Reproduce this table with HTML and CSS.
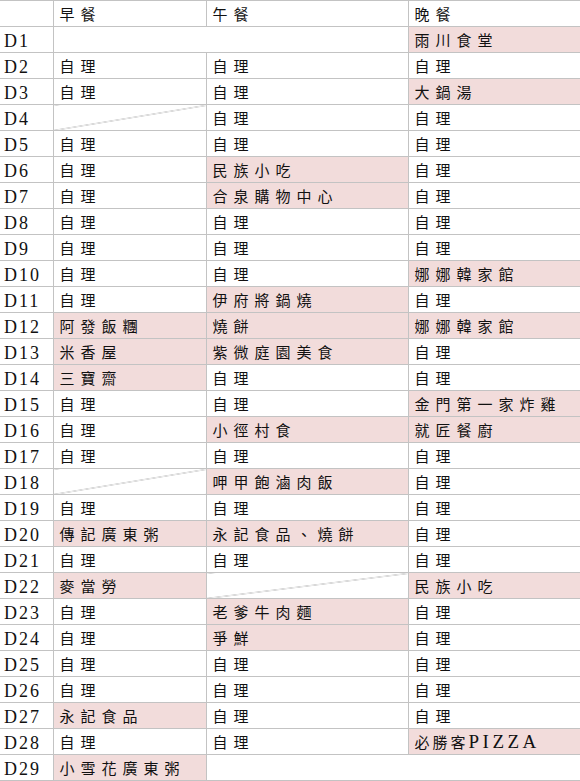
FILE: index.html
```html
<!DOCTYPE html>
<html lang="zh-Hant">
<head>
<meta charset="utf-8">
<title>餐表</title>
<link rel="stylesheet" href="styles.css">
</head>
<body>
<table class="meals">
  <colgroup>
    <col class="c-day"><col class="c-b"><col class="c-l"><col class="c-d">
  </colgroup>
  <thead>
    <tr><th class="day"></th><th>早餐</th><th>午餐</th><th>晚餐</th></tr>
  </thead>
  <tbody>
    <tr><td class="day">D1</td><td colspan="2"></td><td class="pk">雨川食堂</td></tr>
    <tr><td class="day">D2</td><td>自理</td><td>自理</td><td>自理</td></tr>
    <tr><td class="day">D3</td><td>自理</td><td>自理</td><td class="pk">大鍋湯</td></tr>
    <tr><td class="day">D4</td><td class="diag"></td><td>自理</td><td>自理</td></tr>
    <tr><td class="day">D5</td><td>自理</td><td>自理</td><td>自理</td></tr>
    <tr><td class="day">D6</td><td>自理</td><td class="pk">民族小吃</td><td>自理</td></tr>
    <tr><td class="day">D7</td><td>自理</td><td class="pk">合泉購物中心</td><td>自理</td></tr>
    <tr><td class="day">D8</td><td>自理</td><td>自理</td><td>自理</td></tr>
    <tr><td class="day">D9</td><td>自理</td><td>自理</td><td>自理</td></tr>
    <tr><td class="day">D10</td><td>自理</td><td>自理</td><td class="pk">娜娜韓家館</td></tr>
    <tr><td class="day">D11</td><td>自理</td><td class="pk">伊府將鍋燒</td><td>自理</td></tr>
    <tr><td class="day">D12</td><td class="pk">阿發飯糰</td><td class="pk">燒餅</td><td class="pk">娜娜韓家館</td></tr>
    <tr><td class="day">D13</td><td class="pk">米香屋</td><td class="pk">紫微庭園美食</td><td>自理</td></tr>
    <tr><td class="day">D14</td><td class="pk">三寶齋</td><td>自理</td><td>自理</td></tr>
    <tr><td class="day">D15</td><td>自理</td><td>自理</td><td class="pk">金門第一家炸雞</td></tr>
    <tr><td class="day">D16</td><td>自理</td><td class="pk">小徑村食</td><td class="pk">就匠餐廚</td></tr>
    <tr><td class="day">D17</td><td>自理</td><td>自理</td><td>自理</td></tr>
    <tr><td class="day">D18</td><td class="diag"></td><td class="pk">呷甲飽滷肉飯</td><td>自理</td></tr>
    <tr><td class="day">D19</td><td>自理</td><td>自理</td><td>自理</td></tr>
    <tr><td class="day">D20</td><td class="pk">傳記廣東粥</td><td class="pk">永記食品、燒餅</td><td>自理</td></tr>
    <tr><td class="day">D21</td><td>自理</td><td>自理</td><td>自理</td></tr>
    <tr><td class="day">D22</td><td class="pk">麥當勞</td><td class="diag"></td><td class="pk">民族小吃</td></tr>
    <tr><td class="day">D23</td><td>自理</td><td class="pk">老爹牛肉麵</td><td>自理</td></tr>
    <tr><td class="day">D24</td><td>自理</td><td class="pk">爭鮮</td><td>自理</td></tr>
    <tr><td class="day">D25</td><td>自理</td><td>自理</td><td>自理</td></tr>
    <tr><td class="day">D26</td><td>自理</td><td>自理</td><td>自理</td></tr>
    <tr><td class="day">D27</td><td class="pk">永記食品</td><td>自理</td><td>自理</td></tr>
    <tr><td class="day">D28</td><td>自理</td><td>自理</td><td class="pk tight">必勝客<span class="latin">PIZZA</span></td></tr>
    <tr><td class="day">D29</td><td class="pk">小雪花廣東粥</td><td colspan="2"></td></tr>
  </tbody>
</table>
</body>
</html>
```
FILE: styles.css
```css
html, body {
  margin: 0;
  padding: 0;
  background: #ffffff;
}

.meals {
  border-collapse: collapse;
  table-layout: fixed;
  width: 580px;
  font-family: "Liberation Serif", "Noto Sans CJK TC", serif;
  color: #111111;
}

.c-day { width: 53px; }
.c-b { width: 153px; }
.c-l { width: 202px; }
.c-d { width: 172px; }

.meals tr {
  height: 26px;
}

.meals th,
.meals td {
  border: 1px solid #c3c3c3;
  padding: 2px 0 0 6px;
  height: 25px;
  box-sizing: border-box;
  text-align: left;
  vertical-align: middle;
  font-weight: normal;
  font-size: 15px;
  letter-spacing: 6px;
  white-space: nowrap;
  overflow: hidden;
  line-height: 22px;
}

.meals tr > :first-child {
  border-left: none;
}

.meals tr > :last-child {
  border-right: none;
}

.meals .day {
  padding-left: 4px;
  font-size: 18px;
  letter-spacing: 2px;
}

.meals .pk {
  background: #f2dcdb;
}

.meals .tight {
  letter-spacing: 3px;
}

.meals .latin {
  font-size: 19px;
  letter-spacing: 3.5px;
}

.meals .diag {
  background: linear-gradient(to bottom right,
    transparent calc(50% - 0.6px),
    #a8a8a8 50%,
    transparent calc(50% + 0.6px));
}
```
